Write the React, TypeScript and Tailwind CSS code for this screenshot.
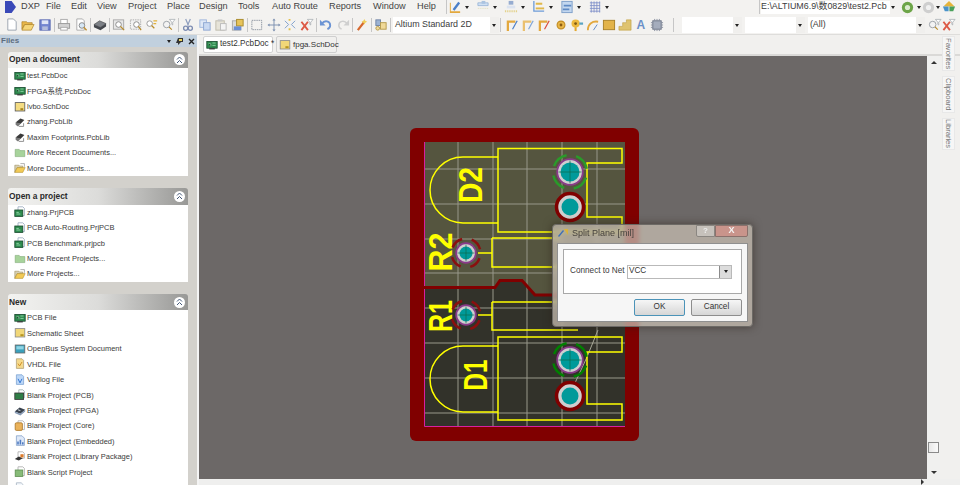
import React from "react";

const F = "font-['Liberation_Sans',Arial,sans-serif]";

type IconName = string;

function Ico({ n, s = 14 }: { n: IconName; s?: number }) {
  const p: Record<string, React.ReactNode> = {
    doc: <><path d="M3 1h6l3 3v9H3z" fill="#fff" stroke="#9aa3ad" /></>,
    open: <><path d="M1 4h5l1 1h5v2H4L1 12z" fill="#e8b64a" stroke="#a97c20" strokeWidth=".7" /><path d="M4 7h10l-3 6H1z" fill="#f6d679" stroke="#a97c20" strokeWidth=".7" /></>,
    save: <><rect x="2" y="2" width="11" height="11" fill="#7386d0" stroke="#5666b0" /><rect x="4" y="2.5" width="7" height="4" fill="#dfe6f6" /><rect x="4.5" y="9" width="6" height="4" fill="#b3bddc" /></>,
    print: <><rect x="4" y="1.5" width="7" height="5" fill="#fff" stroke="#aaa" /><rect x="1.5" y="6" width="12" height="5" fill="#d2d2d2" stroke="#999" /><rect x="4" y="10" width="7" height="3" fill="#fff" stroke="#aaa" /></>,
    prev: <><path d="M3 1h6l2 2v10H3z" fill="#fff" stroke="#aaa" /><circle cx="8.5" cy="8" r="3" fill="#d7e7f5" stroke="#888" /><path d="M10.5 10l3 3" stroke="#c09030" strokeWidth="1.5" /></>,
    cube: <><path d="M1 7l6-4 7 3-6 4z" fill="#7d8187" stroke="#444" strokeWidth=".6" /><path d="M1 7v3l7 3 6-4V6l-6 4z" fill="#44474d" /></>,
    zoom: <><rect x="1.5" y="2" width="11" height="10" fill="#e7e7e7" stroke="#a8a8a8" /><circle cx="7" cy="7" r="3" fill="#fff" stroke="#888" /><path d="M9 9l4 4" stroke="#b98c2a" strokeWidth="1.4" /></>,
    zoomd: <><rect x="1.5" y="2" width="11" height="10" fill="#f2f2f2" stroke="#a8a8a8" strokeDasharray="1.5 1" /><circle cx="8" cy="7" r="3" fill="#fff" stroke="#888" /><path d="M10 9l3 4" stroke="#b98c2a" strokeWidth="1.4" /></>,
    zfil: <><circle cx="5" cy="6" r="3" fill="#fff" stroke="#999" /><path d="M7 8l3 3" stroke="#b98c2a" strokeWidth="1.3" /><path d="M9 3h4M9 6h3" stroke="#e2b13b" strokeWidth="1.4" /></>,
    filt: <><circle cx="5" cy="7" r="3.5" fill="#f3f3f3" stroke="#9a9fa6" /><path d="M7.5 9.5l3 3" stroke="#b98c2a" strokeWidth="1.3" /><path d="M8 1.5h6l-2.5 3v3l-1-.7V4.5z" fill="#fff" stroke="#9a9fa6" strokeWidth=".7" /></>,
    cut: <><path d="M5 1l3 7M10 1L7 8" stroke="#8f9fbe" strokeWidth="1.3" /><circle cx="5" cy="11" r="2.2" fill="none" stroke="#7c8cb2" strokeWidth="1.4" /><circle cx="10" cy="11" r="2.2" fill="none" stroke="#7c8cb2" strokeWidth="1.4" /></>,
    copy: <><rect x="2" y="2" width="7" height="8" fill="#dfe8f6" stroke="#9fb6dc" /><rect x="6" y="5" width="7" height="8" fill="#c9d9f2" stroke="#8ea7d2" /></>,
    paste: <><rect x="2" y="3" width="9" height="10" fill="#e6e3d8" stroke="#bfbbab" /><rect x="7" y="6" width="6" height="7" fill="#f4f4f4" stroke="#bbb" /><rect x="4" y="1.5" width="5" height="2" fill="#c8c8c8" /></>,
    rub: <><rect x="1.5" y="3" width="9" height="10" fill="#dcdcdc" stroke="#aaa" /><rect x="6" y="1.5" width="7" height="7" fill="#e7c45c" stroke="#a88a2a" /><rect x="3" y="9" width="8" height="4" fill="#6c8fd4" /></>,
    sel: <><rect x="2" y="2.5" width="10.5" height="10" fill="none" stroke="#8c94a0" strokeDasharray="1.6 .8" /></>,
    move: <><path d="M7.5 2v11M2 7.5h11" stroke="#7b8faf" strokeWidth="1" /><path d="M7.5 0.5l1.7 2.2H5.8zM7.5 14.5l1.7-2.2H5.8zM.5 7.5l2.2-1.7v3.4zM14.5 7.5l-2.2-1.7v3.4z" fill="#7b8faf" /></>,
    cross: <><path d="M2 3l4 4-4 4M13 3L9 7l4 4" stroke="#7b9cca" strokeWidth="1" fill="none" /><path d="M6 2h2M6 12h2" stroke="#e4c34e" strokeWidth="2" /></>,
    redx: <><path d="M1.5 4l7 9M8.5 4l-7 9" stroke="#dd5a46" strokeWidth="2" /><path d="M8 1.5h6l-2.5 3v3l-1-.7V4.5z" fill="#fff" stroke="#9a9fa6" strokeWidth=".7" /></>,
    undo: <><path d="M3 6c3-4 9-3 9 2 0 2-1 3-3 4" fill="none" stroke="#6c94d4" strokeWidth="2" /><path d="M1 2v6h6z" fill="#6c94d4" /></>,
    redo: <><path d="M12 6c-3-4-9-3-9 2 0 2 1 3 3 4" fill="none" stroke="#cfcfcf" strokeWidth="1.6" /><path d="M14 2v6H8z" fill="#cfcfcf" /></>,
    wand: <><path d="M3 13l7-9" stroke="#d6692f" strokeWidth="2.4" /><path d="M10 1l1 2 2 1-2 1-1 2-1-2-2-1 2-1z" fill="#f0cf5a" /></>,
    bins: <><rect x="2" y="2" width="5" height="6" fill="#9cb3d4" stroke="#6e83a4" /><rect x="7" y="5" width="6" height="7" fill="#f0d999" stroke="#b59a4c" /><circle cx="4" cy="11" r="2" fill="#f0d999" stroke="#b59a4c" /></>,
    route: <><path d="M2 14V4h8" fill="none" stroke="#e3a83d" strokeWidth="2.4" /><path d="M7 12l5-9" stroke="#4b7fc8" strokeWidth="1.3" /></>,
    route2: <><path d="M2 14V4h8" fill="none" stroke="#eac06e" strokeWidth="2.4" /><path d="M7 12l5-9" stroke="#7ea5d8" strokeWidth="1.3" /></>,
    route3: <><path d="M2 14V4h8" fill="none" stroke="#e3a83d" strokeWidth="2.4" /><path d="M7 12l5-9" stroke="#d94c3c" strokeWidth="1.3" /></>,
    pad: <><circle cx="7.5" cy="7.5" r="4.2" fill="#e9b748" stroke="#c18b23" strokeWidth="1.2" /><circle cx="7.5" cy="7.5" r="1.5" fill="#8c5c12" /></>,
    via: <><circle cx="6" cy="6" r="4.4" fill="#edb93f" /><circle cx="6" cy="6" r="1.5" fill="#7d5a15" /><path d="M6 10v4" stroke="#e2a82f" strokeWidth="2.2" /><path d="M10 6h4" stroke="#5aa4c4" strokeWidth="2.4" /></>,
    arc: <><path d="M2 13c0-7 5-10 11-9" fill="none" stroke="#e3a83d" strokeWidth="2" /><path d="M8 13l4-6" stroke="#5a86c4" /></>,
    fill: <rect x="1.5" y="2.5" width="12" height="10" fill="#e2b34a" stroke="#a98127" />,
    poly: <path d="M1 13V9h4V5h4V2h5v11z" fill="#dfc36f" stroke="#bd9a3c" strokeWidth=".6" />,
    chip: <><rect x="3" y="3" width="9" height="9" fill="#a5adbd" stroke="#6b7385" /><path d="M1 5h2M1 7.5h2M1 10h2M12 5h2M12 7.5h2M12 10h2M5 1v2M7.5 1v2M10 1v2M5 12v2M7.5 12v2M10 12v2" stroke="#858d9d" /></>,
    t1: <><path d="M2 14V3h1v9h10v2z" fill="#e3a83d" /><path d="M5 10L11 2l2 1.5-6 8z" fill="#4b7fc8" /></>,
    t2: <><path d="M2 3h11v3H2z" fill="#cfe0f3" stroke="#86a8d0" strokeWidth=".7" /><path d="M2 9h11" stroke="#dcdcb8" strokeDasharray="1 1" /><rect x="6" y="1" width="4" height="3" fill="#aac3e0" /></>,
    t3: <><rect x="5" y="1" width="5" height="4" fill="#96acd0" /><path d="M3 6h9v3H3z" fill="#dbe3f0" /><path d="M1 12h13" stroke="#e1cd7c" strokeDasharray="1 1" strokeWidth="2" /></>,
    t4: <><path d="M2 1v11h11" fill="none" stroke="#6e9cd8" strokeWidth="1.4" /><path d="M4 4h7" stroke="#e0b84a" strokeWidth="2.2" /><path d="M4 9h9" stroke="#e0b84a" strokeWidth="2" /></>,
    t5: <><rect x="2" y="1.5" width="11" height="12" fill="#c3d7ef" stroke="#7d9fc9" /><path d="M4 6h8M3 10h7" stroke="#5f8ac4" strokeWidth="2" /></>,
    t6: <path d="M2 3h11M2 6h11M2 9h11M2 12h11M3.5 1.5v12M6.5 1.5v12M9.5 1.5v12M12.5 1.5v12" stroke="#7e8fc8" strokeWidth=".9" />,
    gc: <><circle cx="7.5" cy="7.5" r="6.5" fill="#6da548" /><circle cx="7.5" cy="7.5" r="3" fill="#dcecd0" /></>,
    gg: <><circle cx="7.5" cy="7.5" r="6.5" fill="#cfcfcf" /><circle cx="7.5" cy="7.5" r="3" fill="#f1f1f1" /></>,
    tree: <><path d="M7.5 1l6 6H1.5z" fill="#e6b43a" /><path d="M1 7h6v5H3z" fill="#4a93c9" /><path d="M8 7h6l-2 5H8z" fill="#4aa05a" /></>,
    pcb: <><rect x="1" y="3" width="13" height="8.5" fill="#2f8a4e" stroke="#17482c" /><path d="M3 6h3v3M8 5h4M8 8h4" stroke="#9be0b2" /><rect x="4" y="11.5" width="7" height="1.5" fill="#333" /></>,
    schdoc: <><rect x="1.5" y="2" width="12" height="10.5" fill="#f4dc82" stroke="#555" /><path d="M8 9h3.5v2.5H8z" fill="#a8851c" /></>,
    lib: <><path d="M2 8l6-5 5 2-5 5z" fill="#3a3a3a" /><path d="M2 8v3l3 2 3-3v-1z" fill="#777" /><path d="M6 13h6V9" stroke="#777" fill="none" /></>,
    fold: <><path d="M1.5 3h5l1 1.5h6V12h-12z" fill="#a7d39b" stroke="#7aa670" strokeWidth=".7" /></>,
    foldo: <><path d="M1 4h5l1 1h4v2H4l-3 6z" fill="#d7d0b6" stroke="#8b7b40" strokeWidth=".6" /><path d="M4 7h10l-3 6H1z" fill="#f3cb56" stroke="#a5811f" strokeWidth=".6" /><path d="M8 2h5v4" stroke="#777" fill="none" strokeWidth=".7" /></>,
    prj: <><path d="M5 1h6l2 2v9H5z" fill="#fff" stroke="#97a7bd" /><rect x="1" y="5" width="10" height="8" fill="#2d8a4d" stroke="#17482c" /><path d="M3 8h3M3 10h5" stroke="#a2e2b8" /></>,
    sheet: <><rect x="1.5" y="2" width="12" height="10.5" fill="#f1d778" stroke="#888" /><path d="M8 9h4v2.5H8z" fill="#b8951f" /></>,
    bus: <><rect x="1.5" y="2.5" width="12" height="10" fill="#3aa0bc" stroke="#666" /><rect x="3" y="4" width="9" height="4" fill="#8fd4e4" /></>,
    vhdl: <><path d="M3 1h7l2 2v10H3z" fill="#f5d98c" stroke="#b3a27a" /><path d="M5 7l2 3 3-5" stroke="#cf8f26" strokeWidth="1.2" fill="none" /></>,
    ver: <><path d="M3 1h7l2 2v10H3z" fill="#bcd7f7" stroke="#7fa5d3" /><path d="M5 6l2.5 5L10 6" stroke="#2a6fd0" strokeWidth="1.2" fill="none" /></>,
    bpcb: <><path d="M6 1h5l2 2v8H6z" fill="#fff" stroke="#9aa" /><rect x="1" y="5" width="11" height="8" fill="#2f7d46" stroke="#333" /></>,
    bfpga: <><path d="M1 8l6-5 7 3-6 5z" fill="#38424e" /><path d="M1 8v2l7 3 6-5V6l-6 5z" fill="#8498b4" /><path d="M5 6l3 1" stroke="#fff" /></>,
    bcore: <><path d="M5 1h6l2 2v9H5z" fill="#fff" stroke="#aaa" /><rect x="1.5" y="3.5" width="9" height="9.5" rx="1.5" fill="#eab25a" stroke="#a87424" /></>,
    bemb: <><path d="M3 1h7l3 3v9H3z" fill="#dfe9f8" stroke="#88a3cc" /><path d="M5 12V8M8 12V6M11 12V9" stroke="#4f7bc2" strokeWidth="2" /></>,
    blib: <><path d="M5 1h6l2 2v6H5z" fill="#fff" stroke="#aaa" /><path d="M1 10l5-3 5 2-5 3z" fill="#333" /><path d="M8 4h4v4H8z" fill="#dd7c2c" /></>,
    bscr: <><path d="M5 1h6l2 2v9H5z" fill="#fff" stroke="#aaa" /><rect x="1.5" y="5" width="9.5" height="8" fill="#87bb78" stroke="#5d8e50" /></>,
    blank: <path d="M3 1h6l3 3v9H3z" fill="#f4f8fc" stroke="#a6b2c0" />,
  };
  return (
    <svg width={s} height={s} viewBox="0 0 15 15" className="shrink-0 block">
      {p[n]}
    </svg>
  );
}

function Sep({ w = "w-[2.6px]" }: { w?: string }) {
  return (
    <div className={`${w} h-[14px] flex justify-center shrink-0`}>
      <div className="w-px h-full bg-[#c6c6c6]" />
    </div>
  );
}

function Slots({ items, w = "w-[16.6px]" }: { items: string[]; w?: string }) {
  return (
    <>
      {items.map((n, i) => (
        <div key={i} className={`${w} flex justify-center shrink-0`}>
          <Ico n={n} />
        </div>
      ))}
    </>
  );
}

function Caret() {
  return <div className="w-0 h-0 shrink-0 border-x-[2.5px] border-x-transparent border-t-[3px] border-t-[#222]" />;
}

function Combo({ text, cls }: { text?: string; cls: string }) {
  return (
    <div className={`${cls} h-[16px] flex items-center shrink-0`}>
      <div className="flex-1 h-full bg-white text-[8.9px] text-[#3c3c3c] pl-[2px] flex items-center whitespace-nowrap overflow-hidden">{text}</div>
      <div className="w-[9px] h-full bg-[#f0efed] flex items-center justify-center"><Caret /></div>
    </div>
  );
}

const menu: [string, string][] = [
  ["File", "w-[25px]"], ["Edit", "w-[26px]"], ["View", "w-[31px]"], ["Project", "w-[39px]"], ["Place", "w-[32px]"],
  ["Design", "w-[39px]"], ["Tools", "w-[34px]"], ["Auto Route", "w-[57px]"], ["Reports", "w-[44px]"], ["Window", "w-[44px]"], ["Help", "w-[28px]"],
];

function MenuBar() {
  return (
    <div className="h-[16px] pb-[2px] flex items-center bg-[#f3f2f0] text-[9.2px] text-[#444] shrink-0">
      <div className="w-[21px] pl-[5px]">
        <div className="w-[11px] h-[12px] bg-[#3a49b8] [clip-path:polygon(0_0,60%_0,100%_50%,60%_100%,0_100%)]" />
      </div>
      <div className="w-[25px]">DXP</div>
      {menu.map(([m, w]) => <div key={m} className={`${w} shrink-0`}>{m}</div>)}
      <Sep w="w-[3px]" />
      <div className="flex items-center">
        {["t1", "t2", "t3", "t4", "t5", "t6"].map((n) => (
          <div key={n} className="w-[28px] flex items-center gap-[3px]">
            <Ico n={n} />
            <Caret />
          </div>
        ))}
      </div>
      <div className="flex-1" />
      <Sep w="w-[3px]" />
      <div className="w-[129px] text-[8.9px] bg-white h-[13px] flex items-center text-[#3c3c3c] font-['Liberation_Sans','Noto_Sans_CJK_SC',sans-serif] whitespace-nowrap overflow-hidden">E:\ALTIUM6.9\数0829\test2.Pcb</div>
      <div className="w-[6px] flex justify-center"><Caret /></div>
      <div className="flex items-center ml-[4.5px] mr-[4px]">
        <Ico n="gc" s={13} />
        <div className="ml-[3px]"><Caret /></div>
        <div className="ml-[1px]"><Ico n="gg" s={13} /></div>
        <div className="ml-[1.5px]"><Caret /></div>
        <div className="ml-[2px]"><Ico n="tree" s={14} /></div>
      </div>
    </div>
  );
}

function ToolBar() {
  return (
    <div className="h-[19px] flex items-center bg-[#f3f2f0] shrink-0 pl-[3.5px] border-b border-[#dedddb]">
      <Slots items={["doc", "open", "save"]} /><Sep />
      <Slots items={["print", "prev"]} /><Sep />
      <Slots items={["cube"]} /><Sep />
      <Slots items={["zoom", "zoomd", "zfil", "filt"]} /><Sep />
      <Slots items={["cut", "copy", "paste", "rub"]} /><Sep />
      <Slots items={["sel", "move", "cross", "redx"]} /><Sep />
      <Slots items={["undo", "redo"]} /><Sep />
      <Slots items={["wand"]} /><Sep />
      <Slots items={["bins"]} /><Sep />
      <Combo text="Altium Standard 2D" cls="w-[106px] ml-[1px]" />
      <div className="w-[6px]"><Sep w="w-[3px]" /></div>
      <Slots items={["route", "route2", "route3", "pad", "via", "arc", "fill", "poly"]} w="w-[16px]" />
      <div className="w-[16px] text-center text-[12px] font-bold text-[#6a8fc8] leading-none">A</div>
      <Slots items={["chip"]} w="w-[17px]" />
      <div className="w-[16px] flex justify-center"><Sep w="w-[3px]" /></div>
      <Combo cls="w-[60px]" />
      <Combo cls="w-[60px] ml-[3px]" />
      <Combo text="(All)" cls="w-[117px] ml-[3px]" />
      <div className="ml-[3px]"><Ico n="filt" /></div>
      <div><Ico n="redx" /></div>
    </div>
  );
}

type Row = [string, string];
function Section({ title, rows, first }: { title: string; rows: Row[]; first?: boolean }) {
  return (
    <div className={`w-[180px] ml-[8px] ${first ? "mt-[4.5px]" : "mt-[12px]"} shrink-0`}>
      <div className="h-[16.5px] rounded-t-[3px] bg-gradient-to-r from-[#f3f3f1] via-[#dcdcda] to-[#989896] flex items-center justify-between pl-[1px] pr-[3px]">
        <span className="text-[8.4px] font-bold text-[#2a2a2a]">{title}</span>
        <div className="w-[11px] h-[11px] rounded-full bg-white flex items-center justify-center">
          <svg width="7" height="8" viewBox="0 0 7 8"><path d="M1 3.5L3.5 1 6 3.5M1 7l2.5-2.5L6 7" fill="none" stroke="#44597a" strokeWidth="1" /></svg>
        </div>
      </div>
      <div className="bg-white">
        {rows.map(([ic, t], i) => (
          <div key={i} className="h-[15.45px] flex items-center pl-[6px] text-[7.5px] text-[#3b3b3b] whitespace-nowrap font-['Liberation_Sans','Noto_Sans_CJK_SC',sans-serif]">
            <div className="w-[13px]"><Ico n={ic} s={12} /></div>
            <span>{t}</span>
          </div>
        ))}
      </div>
    </div>
  );
}

function FilesPanel() {
  return (
    <div className="w-[197px] shrink-0 bg-[#d3d1cc] flex flex-col overflow-hidden">
      <div className="h-[12px] bg-[#c1d0de] flex items-center justify-between shrink-0 pl-[1px] pr-[2px]">
        <span className="text-[8px] font-bold text-[#5d6d7e]">Files</span>
        <div className="flex items-center gap-[4px]">
          <Caret />
          <svg width="9" height="9" viewBox="0 0 9 9"><path d="M3 1h5v4H6l-3 3V6H1z" fill="#333" /><path d="M4 2h3v2H4z" fill="#e8d25c" /></svg>
          <svg width="7" height="7" viewBox="0 0 7 7"><path d="M1 1l5 5M6 1L1 6" stroke="#222" strokeWidth="1.4" /></svg>
        </div>
      </div>
      <Section first title="Open a document" rows={[["pcb", "test.PcbDoc"], ["pcb", "FPGA系统.PcbDoc"], ["schdoc", "lvbo.SchDoc"], ["lib", "zhang.PcbLib"], ["lib", "Maxim Footprints.PcbLib"], ["fold", "More Recent Documents..."], ["foldo", "More Documents..."]]} />
      <Section title="Open a project" rows={[["prj", "zhang.PrjPCB"], ["prj", "PCB Auto-Routing.PrjPCB"], ["prj", "PCB Benchmark.prjpcb"], ["fold", "More Recent Projects..."], ["foldo", "More Projects..."]]} />
      <Section title="New" rows={[["pcb", "PCB File"], ["sheet", "Schematic Sheet"], ["bus", "OpenBus System Document"], ["vhdl", "VHDL File"], ["ver", "Verilog File"], ["bpcb", "Blank Project (PCB)"], ["bfpga", "Blank Project (FPGA)"], ["bcore", "Blank Project (Core)"], ["bemb", "Blank Project (Embedded)"], ["blib", "Blank Project (Library Package)"], ["bscr", "Blank Script Project"], ["blank", "Blank Project"]]} />
    </div>
  );
}

function Pad({ x, y, r, arcs, big }: { x: number; y: number; r: number; arcs: string; big?: boolean }) {
  const d = big ? 17 : 14.5;
  return (
    <g>
      <circle cx={x} cy={y} r={d} fill="none" stroke={arcs} strokeWidth="2.5" strokeDasharray={big ? "17 9.7" : "13 9.8"} strokeDashoffset={big ? 21 : 17.5} />
      <circle cx={x} cy={y} r={r + 3.3} fill="#cfcfcf" stroke="#8a3a8a" strokeWidth="1.8" />
      <circle cx={x} cy={y} r={r} fill="#009a9a" />
      <path d={`M${x - r - 2} ${y}H${x + r + 2}M${x} ${y - r - 2}V${y + r + 2}`} stroke="#0b6b4d" strokeWidth=".7" />
    </g>
  );
}

function Pcb() {
  const gx = [458, 493, 527, 562, 597];
  const gy = [169, 204, 239, 273, 308, 343, 378, 413];
  const Y = "#ffff00";
  const lbl = (t: string, cx: number, cy: number, len: number) => (
    <text transform={`translate(${cx} ${cy}) rotate(-90)`} textAnchor="middle" textLength={len} lengthAdjust="spacingAndGlyphs" fontFamily="Liberation Sans" fontSize="33" fontWeight="700" fill={Y}>{t}</text>
  );
  return (
    <svg viewBox="199 56 728 423" className="w-full h-full block">
      <rect x="410" y="128" width="229" height="313" rx="6" fill="#800000" />
      <rect x="424" y="142" width="201" height="285" fill="#32322a" />
      <path d="M424 142H625V295H535L522 280H500L495 287H424Z" fill="#55553f" />
      {gx.map((x) => <path key={x} d={`M${x} 142V426`} stroke="#98988a" strokeWidth="1" />)}
      {gy.map((y) => <path key={y} d={`M424 ${y}H625`} stroke="#98988a" strokeWidth="1" />)}
      <path d="M424.5 142V426.5H625" fill="none" stroke="#d820a0" strokeWidth="1" />
      <path d="M424 287.5H495L500 280.5H522L535 295H625" fill="none" stroke="#800000" strokeWidth="3" />
      <path d="M598 330L587 357L575 383" fill="none" stroke="#a8a898" strokeWidth="1" />
      <g fill="none" stroke={Y} strokeWidth="1.5">
        <path d="M622 148.5H498V232H622V217H587V163H622Z" />
        <path d="M498 157H463A33 33 0 0 0 463 223H498" />
        <path d="M622 337H498V420H622V404H587V352H622Z" />
        <path d="M498 346H463A33 33 0 0 0 463 412H498" />
        <path d="M478 253H492M492 238H560M492 238V267H560" />
        <path d="M478 315H492M492 302H560M492 302V330H578" />
      </g>
      {lbl("D2", 482, 185, 36)}
      {lbl("R2", 452, 252, 39)}
      {lbl("R1", 452, 316, 32)}
      {lbl("D1", 487, 375, 31)}
      <Pad x={570} y={172} r={9.5} arcs="#2a9a2a" big />
      <circle cx="570" cy="207" r="13.5" fill="#cfcfcf" stroke="#800000" strokeWidth="3.5" />
      <circle cx="570" cy="207" r="8.5" fill="#009a9a" />
      <Pad x={466} y={253} r={6.5} arcs="#8a0f0f" />
      <Pad x={466} y={315} r={6.5} arcs="#8a0f0f" />
      <Pad x={570} y={360} r={9.5} arcs="#008000" big />
      <circle cx="570" cy="396" r="13.5" fill="#cfcfcf" stroke="#800000" strokeWidth="3.5" />
      <circle cx="570" cy="396" r="8.5" fill="#009a9a" />
    </svg>
  );
}

function Dialog() {
  return (
    <div className="absolute left-[353px] top-[168px] w-[201px] h-[103px] rounded-[4px] bg-[#c6bcb0]/75 backdrop-blur-[2px] border border-[#6d6a66] shadow-[0_0_8px_rgba(40,30,20,0.55)] flex flex-col px-[4px] pb-[4px]">
      <div className="h-[18px] flex items-center shrink-0 relative">
        <svg width="12" height="12" viewBox="0 0 12 12" className="shrink-0"><path d="M1 8l5-6 1 1-5 6z" fill="#3f6fb8" /><path d="M7 1h4v6z" fill="#dbb33e" /></svg>
        <span className="ml-[3px] text-[9px] text-[#46423e]">Split Plane [mil]</span>
        <div className="absolute right-[0px] top-[0px] flex h-[12px]">
          <div className="w-[19px] rounded-bl-[2px] bg-[#c6c1bb] border border-[#8a8681] text-[8px] font-bold text-[#eee] flex items-center justify-center">?</div>
          <div className="w-[33px] rounded-br-[2px] bg-[#c9948b] border border-[#8a716c] text-[9px] font-bold text-[#f5f5f5] flex items-center justify-center">X</div>
        </div>
      </div>
      <div className="flex-1 bg-[#f6f6f6] border border-[#8f8f8f] flex flex-col px-[5px] pt-[5px]">
        <div className="h-[45px] bg-white border border-[#a8a8a8] flex items-center shrink-0">
          <span className="ml-[6px] w-[57px] shrink-0 text-[8.2px] text-[#3b3b3b] whitespace-nowrap">Connect to Net</span>
          <div className="h-[14px] w-[105px] border border-[#b9b9b9] flex items-center bg-white">
            <span className="flex-1 pl-[1px] text-[8.2px] text-[#333]">VCC</span>
            <div className="w-[12px] h-full bg-[#dcdcdc] border-l border-[#8b8b8b] flex items-center justify-center"><Caret /></div>
          </div>
        </div>
        <div className="flex justify-end gap-[6px] mt-[5px]">
          <div className="w-[51px] h-[17px] rounded-[2px] border border-[#4b93b8] bg-gradient-to-b from-[#f6f6f6] to-[#d6d6d6] text-[8.2px] text-[#333] flex items-center justify-center">OK</div>
          <div className="w-[51px] h-[17px] rounded-[2px] border border-[#8d8d8d] bg-gradient-to-b from-[#f6f6f6] to-[#d6d6d6] text-[8.2px] text-[#333] flex items-center justify-center">Cancel</div>
        </div>
      </div>
    </div>
  );
}

function Tabs() {
  return (
    <div className="h-[21px] bg-[#f1f0ee] flex items-start pt-[1px] pl-[4px] gap-[3px] shrink-0 border-b-[2px] border-b-[#dad9d7]">
      <div className="w-[70px] h-[17px] bg-white border border-[#d2d2d2] rounded-[2px] flex items-center pl-[2px] gap-[2px] text-[8.2px] text-[#333] whitespace-nowrap">
        <Ico n="pcb" s={12} />test2.PcbDoc *
      </div>
      <div className="w-[61px] h-[17px] bg-[#f1f0ee] border border-[#cfcfcf] rounded-[2px] flex items-center pl-[2px] gap-[2px] text-[8px] text-[#333] whitespace-nowrap">
        <Ico n="sheet" s={12} />fpga.SchDoc
      </div>
    </div>
  );
}

function VTab({ t, cls }: { t: string; cls: string }) {
  return (
    <div className={`${cls} w-[13px] bg-[#f6f6f6] border border-[#e8e8e8] flex items-center justify-center text-[7.6px] text-[#777] [writing-mode:vertical-rl]`}>{t}</div>
  );
}

export default function App() {
  return (
    <div className={`${F} relative w-[960px] h-[485px] overflow-hidden flex flex-col bg-[#f1f0ee] blur-[0.35px]`}>
      <MenuBar />
      <ToolBar />
      <div className="flex-1 flex min-h-0">
        <FilesPanel />
        <div className="w-[2px] bg-[#f4f4f4] shrink-0" />
        <div className="flex-1 flex flex-col min-w-0">
          <Tabs />
          <div className="flex-1 flex min-h-0">
            <div className="w-[728px] bg-[#6c6867] relative shrink-0">
              <Pcb />
              <Dialog />
            </div>
            <div className="w-[13px] bg-[#f0f0ef] flex flex-col items-center justify-between py-[5px] shrink-0">
              <div className="w-0 h-0 border-x-[3px] border-x-transparent border-b-[3px] border-b-[#333]" />
              <div className="flex flex-col items-center gap-[18px]">
                <div className="w-[11px] h-[11px] border border-[#8a8a8a] bg-gradient-to-r from-[#e8e8e8] to-[#fafafa]" />
                <div className="w-0 h-0 border-x-[3px] border-x-transparent border-t-[3px] border-t-[#333]" />
              </div>
            </div>
            <div className="flex-1" />
          </div>
          <div className="h-[6px] bg-[#efefee] shrink-0 flex justify-end pr-[36px]">
            <div className="w-0 h-0 border-y-[3px] border-y-transparent border-l-[3px] border-l-[#333]" />
          </div>
        </div>
      </div>
      <div className="absolute left-[942px] top-[36px] flex flex-col gap-[5px]">
        <VTab t="Favorites" cls="h-[35px]" />
        <VTab t="Clipboard" cls="h-[37px]" />
        <VTab t="Libraries" cls="h-[32px]" />
      </div>
    </div>
  );
}
